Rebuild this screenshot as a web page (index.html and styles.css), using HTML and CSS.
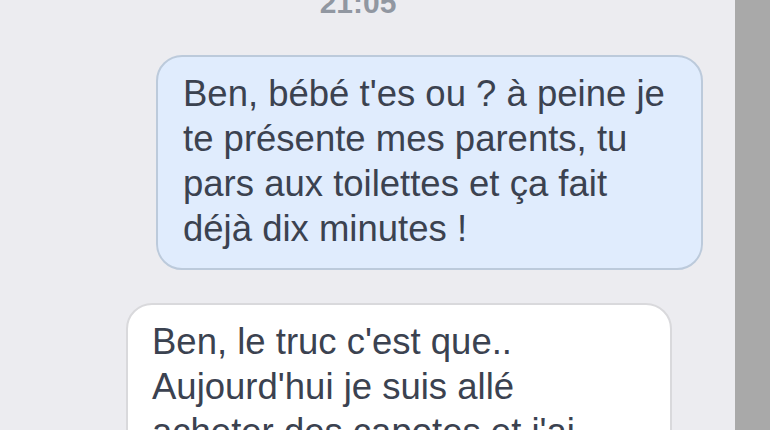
FILE: index.html
```html
<!DOCTYPE html>
<html>
<head>
<meta charset="utf-8">
<link rel="stylesheet" href="styles.css">
</head>
<body>
<div class="screen">
  <div class="chat">
    <div class="time">21:05</div>
    <div class="msg sent">Ben, bébé t'es ou ? à peine je te présente mes parents, tu pars aux toilettes et ça fait déjà dix minutes !</div>
    <div class="msg recv">Ben, le truc c'est que.. Aujourd'hui je suis allé acheter des capotes et j'ai croisé ton père à la pharmacie...</div>
  </div>
  <div class="scrollbar"></div>
</div>
</body>
</html>
```
FILE: styles.css
```css
html, body {
  margin: 0;
  padding: 0;
  height: 100%;
  overflow: hidden;
}
body {
  font-family: "Liberation Sans", Arial, sans-serif;
  background: #ececf0;
}
.screen {
  display: flex;
  height: 430px;
  overflow: hidden;
}
.chat {
  flex: 1;
  display: flex;
  flex-direction: column;
  background: #ececf0;
}
.scrollbar {
  width: 35px;
  background: #a9a9a9;
}
.time {
  margin-top: -12px;
  text-align: center;
  font-weight: bold;
  font-size: 30px;
  line-height: 30px;
  color: #9197a1;
  padding-right: 19px;
}
.msg {
  box-sizing: border-box;
  width: 547px;
  font-size: 36.5px;
  line-height: 45px;
  color: #3b4250;
  border-radius: 26px;
  padding: 14px 25px 17px 25px;
}
.sent {
  align-self: flex-end;
  margin-right: 32px;
  margin-top: 37px;
  background: #e0ecfd;
  border: 2px solid #bccadb;
}
.recv {
  align-self: flex-start;
  margin-left: 126px;
  margin-top: 33px;
  width: 546px;
  padding-left: 24px;
  background: #ffffff;
  border: 2px solid #d9d9dc;
}
```
